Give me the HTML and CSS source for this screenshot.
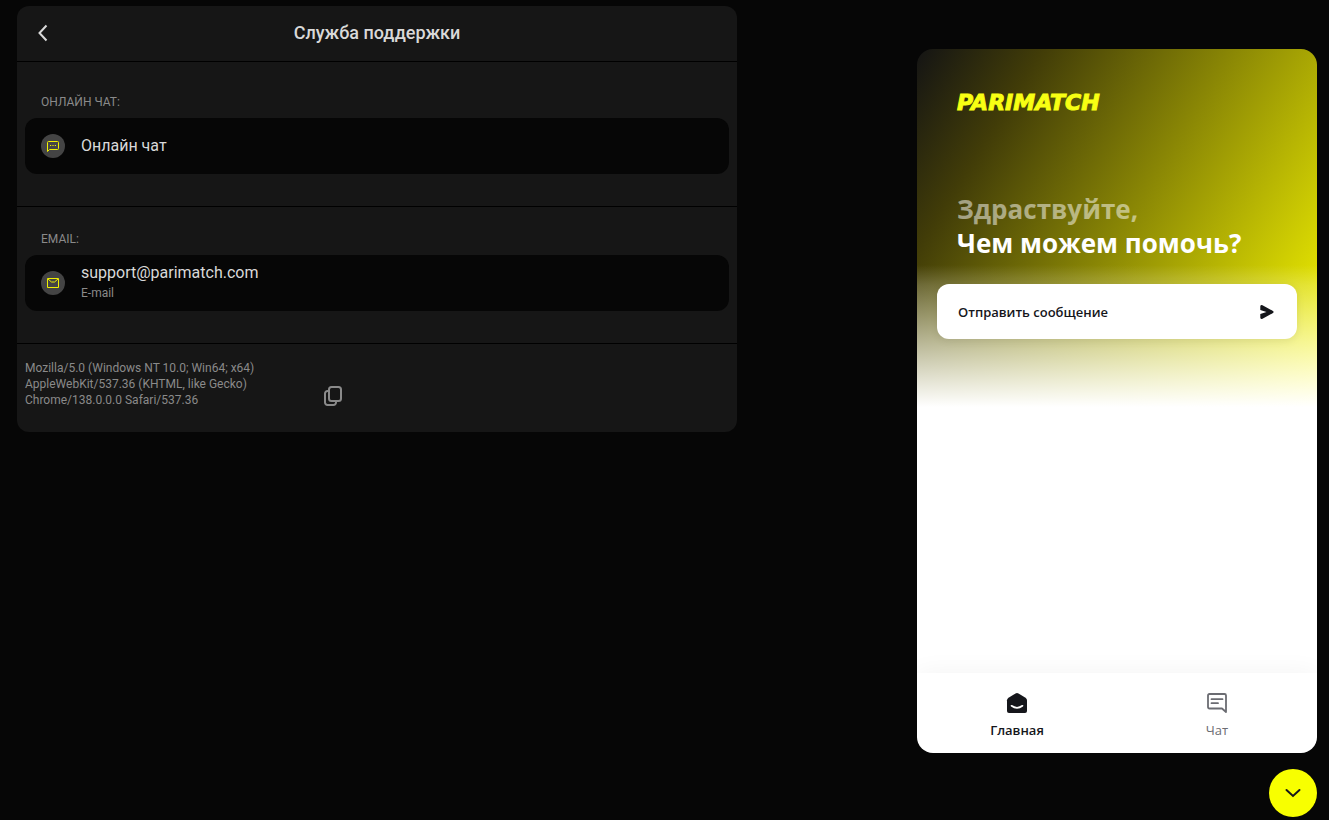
FILE: index.html
```
<!DOCTYPE html>
<html lang="ru">
<head>
    <meta charset="UTF-8">
    <meta name="viewport" content="width=device-width, initial-scale=1.0">
    <title>Служба поддержки</title>
    <link rel="stylesheet" href="styles.css">
</head>
<body>
    <main>
        <div class="card">
            <header class="card-header">
                <button class="back" aria-label="Назад">
                    <svg width="24" height="24" viewBox="0 0 24 24"><path d="M17.500 4.500l-7 7.500 7 7.500" fill="none" stroke="currentColor" stroke-width="2"/></svg>
                </button>
                <h1>Служба поддержки</h1>
            </header>
            <section class="first">
                <h2>Онлайн чат:</h2>
                <a class="row" href="#chat">
                    <span class="icon">
                        <svg width="14" height="14" viewBox="0 0 14 14"><path d="M1.500 12.500v-9q0-1 1-1h9q1 0 1 1v6q0 1-1 1h-8z" fill="none" stroke="currentColor" stroke-linejoin="round"/><path d="M4 6.500h1.200M6.400 6.500h1.200M8.800 6.500h1.200" stroke="currentColor" stroke-width="1.200"/></svg>
                    </span>
                    <span class="row-text">Онлайн чат</span>
                </a>
            </section>
            <section>
                <h2>Email:</h2>
                <a class="row" href="mailto:support@parimatch.com">
                    <span class="icon">
                        <svg width="14" height="14" viewBox="0 0 14 14"><path d="M1.500 2.500h11v9h-11zM2 3l3.500 3h3l3.500-3" fill="none" stroke="currentColor" stroke-linejoin="round"/></svg>
                    </span>
                    <span class="row-text">support@parimatch.com<small>E-mail</small></span>
                </a>
            </section>
            <footer class="agent">
                <p>Mozilla/5.0 (Windows NT 10.0; Win64; x64) AppleWebKit/537.36 (KHTML, like Gecko) Chrome/138.0.0.0 Safari/537.36</p>
                <button class="copy" aria-label="Копировать">
                    <svg width="24" height="24" viewBox="0 0 24 24"><g fill="none" stroke="currentColor" stroke-width="2"><rect x="8" y="3" width="12" height="14" rx="2.500"/><path d="M8 7H6.500A2.500 2.500 0 0 0 4 9.500v9A2.500 2.500 0 0 0 6.500 21h6a2.500 2.500 0 0 0 2.500-2.500V17"/></g></svg>
                </button>
            </footer>
        </div>
    </main>
    <aside>
        <div class="messenger">
            <div class="hero">
                <div class="logo">PARIMATCH</div>
                <p class="hello">Здраствуйте,</p>
                <p class="question">Чем можем помочь?</p>
                <button class="send">
                    Отправить сообщение
                    <svg width="16" height="16" viewBox="0 0 16 16"><path d="M1.300 2.300Q1.600.5 3.500 1.200L14 7Q15.200 8 14 9L3.500 14.800Q1.600 15.500 1.300 13.700V10l6.200-2-6.200-2z" fill="currentColor"/></svg>
                </button>
            </div>
            <nav>
                <a class="active" href="#home">
                    <svg width="24" height="24" viewBox="0 0 24 24"><path d="M10.500 2.500q1.500-.8 3 0l7 4.200Q22 7.700 22 9.200V20q0 2-2 2H4q-2 0-2-2V9.200q0-1.500 1.500-2.500z" fill="currentColor"/><path d="M6.500 14.800q5.500 4 11 0" fill="none" stroke="#fff" stroke-width="1.700" stroke-linecap="round"/></svg>
                    Главная
                </a>
                <a href="#chat">
                    <svg width="24" height="24" viewBox="0 0 24 24"><path d="M4.500 3h15q1.500 0 1.500 1.500V21l-4-3.500H4.500Q3 17.500 3 16V4.500Q3 3 4.500 3zM6.500 8.200h11M6.500 12.200h6.500" fill="none" stroke="currentColor" stroke-width="1.800" stroke-linejoin="round" stroke-linecap="round"/></svg>
                    Чат
                </a>
            </nav>
        </div>
        <button class="launcher" aria-label="Закрыть чат">
            <svg width="24" height="24" viewBox="0 0 24 24"><path d="M5.500 9l6.500 6 6.500-6" fill="none" stroke="currentColor" stroke-width="2" stroke-linecap="round"/></svg>
        </button>
    </aside>
</body>
</html>
```
FILE: styles.css
```
* { box-sizing: border-box; }
body { margin: 0; min-height: 100vh; display: flex; justify-content: space-between; gap: 24px; background: #060606; font-family: Roboto, sans-serif; color: #d9d9d9; }
h1, h2, p { margin: 0; }
button { padding: 0; border: none; background: none; color: inherit; font-family: inherit; cursor: pointer; }
a { color: inherit; text-decoration: none; }
svg { display: block; flex: none; }

main { flex: 1; padding: 6px 0 24px 17px; }
.card { max-width: 720px; background: #161616; border-radius: 12px; }
.card-header { display: grid; grid-template-columns: 24px 1fr 24px; align-items: center; padding: 15px 12px 16px; border-bottom: 1px solid #000; }
.card-header h1 { font-size: 18px; line-height: 24px; font-weight: 500; text-align: center; }
section { padding: 24px 8px 32px; border-bottom: 1px solid #000; }
section.first { padding-top: 32px; }
h2 { margin: 0 16px 8px; font-size: 12px; line-height: 16px; font-weight: 400; text-transform: uppercase; color: #8a8a8a; }
.row { display: flex; align-items: center; gap: 16px; height: 56px; padding: 0 16px; background: #060606; border-radius: 12px; }
.row-text { font-size: 16px; line-height: 20px; }
.row-text small { display: block; font-size: 12px; color: #8a8a8a; }
.icon { display: flex; align-items: center; justify-content: center; width: 24px; height: 24px; border-radius: 50%; background: #444; color: #f0f000; }
.agent { display: flex; align-items: flex-end; gap: 56px; padding: 16px 8px 24px; color: #8a8a8a; }
.agent p { width: 240px; font-size: 12px; line-height: 16px; }

aside { display: flex; flex-direction: column; align-items: flex-end; gap: 16px; padding: 49px 12px 3px 0; font-family: "Open Sans", "Noto Sans", sans-serif; }
.messenger { flex: 1; display: flex; flex-direction: column; justify-content: space-between; width: 400px; background: linear-gradient(transparent 40px, #fff 40px); border-radius: 16px; overflow: hidden; color: #15161b; }
.hero { height: 360px; padding: 40px 20px 0; background: linear-gradient(to bottom, transparent 216px, rgba(255, 255, 255, 0.2) 236px, #fff 358px), linear-gradient(122deg, #141414, #413c08 20%, #ff0); }
.logo { padding-left: 20px; font: italic 700 22px/28px "DejaVu Sans", sans-serif; color: #f8ff13; -webkit-text-stroke: 1px #f8ff13; }
.hello, .question { padding-left: 20px; font-size: 26px; line-height: 34px; font-weight: 700; color: #fff; }
.hello { margin-top: 75px; color: rgba(255, 255, 255, 0.5); }
.send { display: flex; align-items: center; justify-content: space-between; width: 100%; height: 55px; margin-top: 24px; padding: 0 22px 0 21px; border-radius: 12px; background: #fff; font-size: 13px; font-weight: 600; box-shadow: 0 2px 8px rgba(0, 0, 0, 0.08); }
nav { display: grid; grid-template-columns: 1fr 1fr; height: 80px; box-shadow: 0 0 24px rgba(0, 0, 0, 0.05); }
nav a { display: flex; flex-direction: column; align-items: center; gap: 5px; padding-top: 18px; font-size: 13px; line-height: 20px; color: #6b6c72; }
nav .active { font-weight: 600; color: #15161b; }
.launcher { display: flex; align-items: center; justify-content: center; width: 48px; height: 48px; border-radius: 50%; background: #f8ff00; color: #15161b; }
```
